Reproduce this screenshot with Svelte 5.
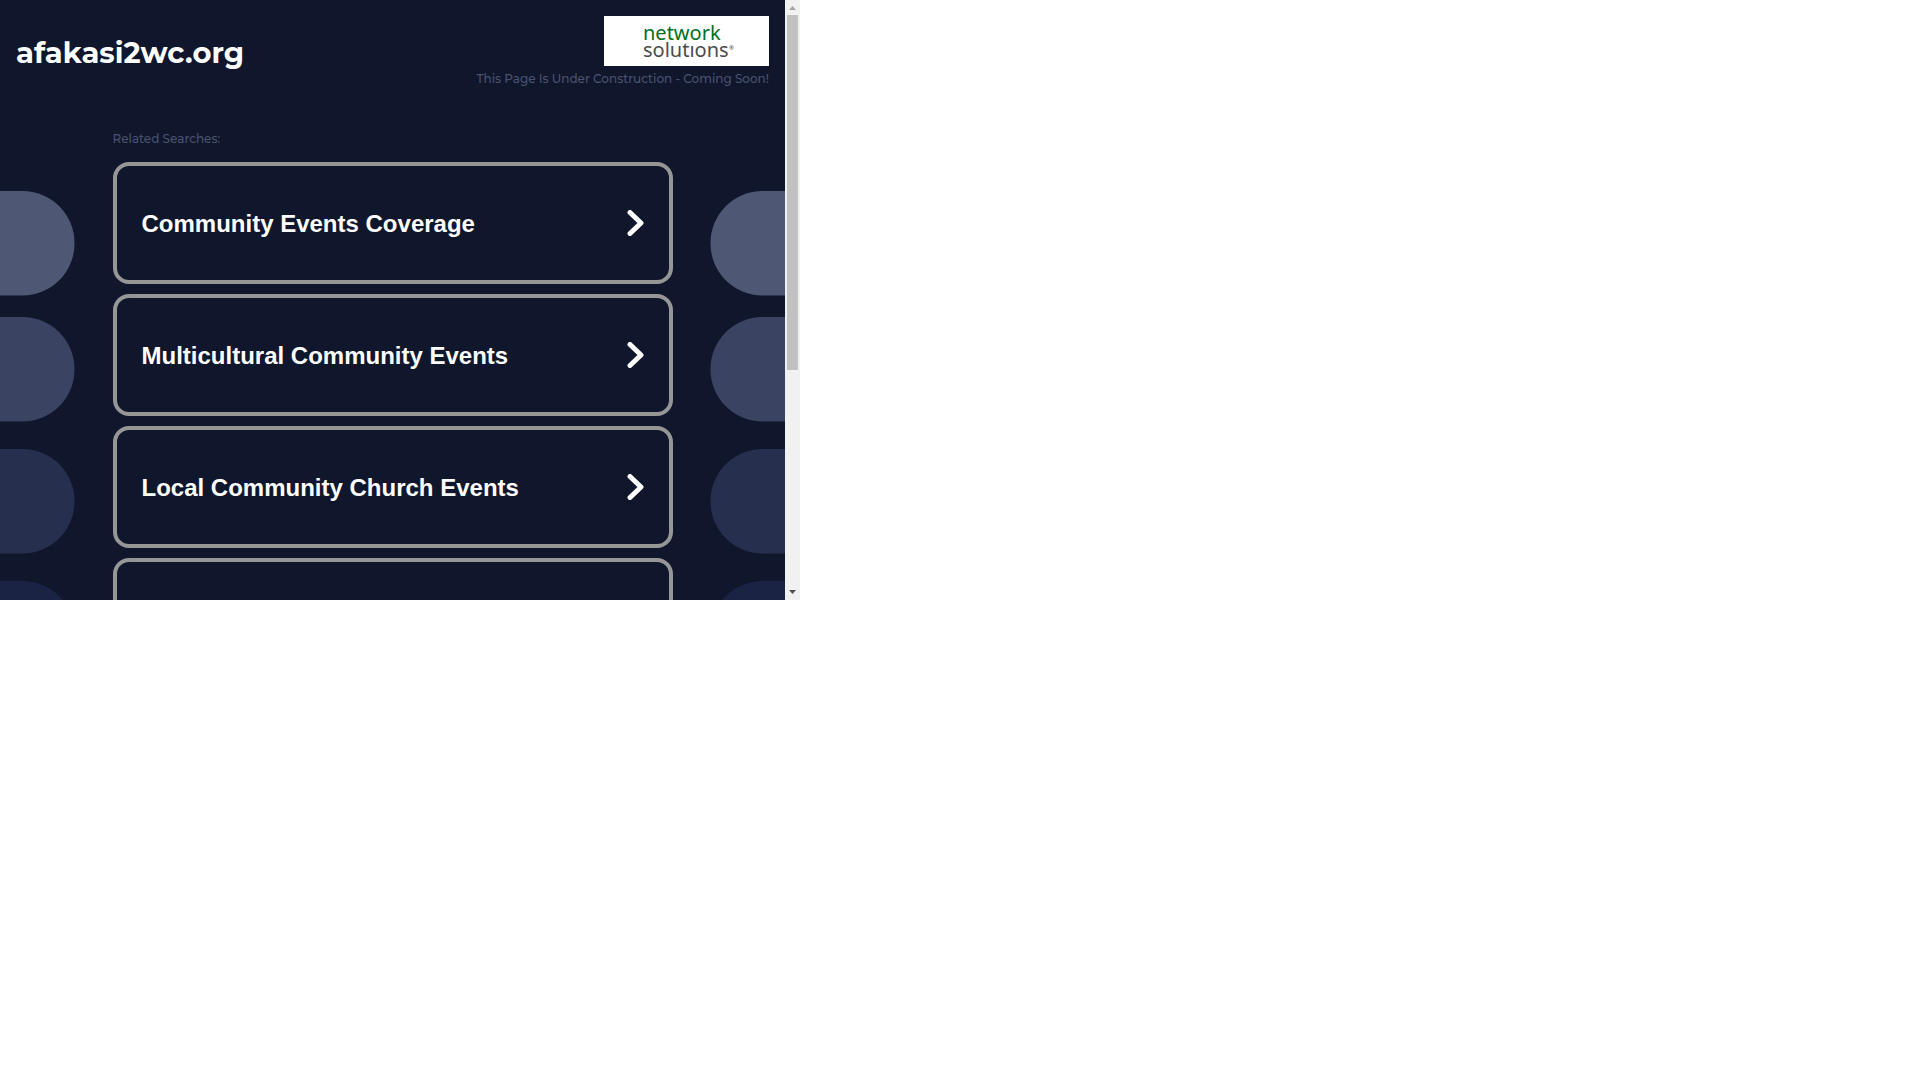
<script lang="ts">
	const domain = 'afakasi2wc.org';

	const searches = [
		'Community Events Coverage',
		'Multicultural Community Events',
		'Local Community Church Events',
		''
	];

	const pills = [
		{ y: 0, color: '#4e5773' },
		{ y: 126, color: '#3b4362' },
		{ y: 258, color: '#262f4e' },
		{ y: 390, color: '#1a2344' }
	];
</script>

{#snippet decor(side: string)}
	<svg class="decor {side}" viewBox="0 0 75 495" width="75" height="495" aria-hidden="true">
		{#each pills as pill}
			<rect x="-75" y={pill.y} width="149.5" height="104.5" rx="52" fill={pill.color} />
		{/each}
	</svg>
{/snippet}

<div class="frame">
	<div class="page">
		<header>
			<h1>{domain}</h1>
			<div class="brand">
				<a class="logo" href="#networksolutions" aria-label="Network Solutions">
					<svg viewBox="0 0 165 50" width="165" height="50">
						<text>
							<tspan x="39" y="24" fill="#00701f">network</tspan>
							<tspan x="39" y="41" fill="#4b4b4d">solutıons</tspan>
							<tspan class="mark" x="125" y="34" fill="#4b4b4d">®</tspan>
						</text>
					</svg>
				</a>
				<p class="tagline">This Page Is Under Construction - Coming Soon!</p>
			</div>
		</header>

		<div class="columns">
			{@render decor('left')}
			<main>
				<p class="label">Related Searches:</p>
				<nav>
					{#each searches as term, i}
						<a class="search" href="#search-{i + 1}">
							<span>{term}</span>
							<svg class="chevron" viewBox="0 0 17 26" width="17" height="26" aria-hidden="true">
								<path d="M3 2.5 L14 13 L3 23.5" />
							</svg>
						</a>
					{/each}
				</nav>
			</main>
			{@render decor('right')}
		</div>
	</div>

	<div class="scrollbar" aria-hidden="true">
		<svg viewBox="0 0 15 15" width="15" height="15">
			<path d="M4 10 L7.5 6 L11 10 Z" fill="#a3a3a3" />
		</svg>
		<div class="track">
			<div class="thumb"></div>
		</div>
		<svg viewBox="0 0 15 15" width="15" height="15">
			<path d="M4 5 L7.5 9 L11 5 Z" fill="#505050" />
		</svg>
	</div>
</div>

<style>
	:global(body) {
		margin: 0;
		background: #fff;
	}

	.frame {
		display: flex;
		width: 100%;
		max-width: 800px;
		height: 600px;
		overflow: hidden;
	}

	.page {
		flex: 1;
		min-width: 0;
		overflow: hidden;
		background: #10162b;
		color: #fff;
		font-family: Montserrat, Inter, sans-serif;
	}

	header {
		display: flex;
		justify-content: space-between;
		padding: 16px 16px 0;
	}

	h1 {
		margin: 16px 0 0;
		font-size: 29px;
		line-height: 42px;
		font-weight: 700;
	}

	.brand {
		display: flex;
		flex-direction: column;
		align-items: flex-end;
	}

	.logo {
		display: flex;
		background: #fff;
		font-family: 'Noto Sans', sans-serif;
		font-size: 20px;
	}

	.mark {
		font-size: 6px;
	}

	.tagline,
	.label {
		margin: 0;
		color: #4a5270;
		font-size: 12px;
		line-height: 26px;
		font-weight: 500;
	}

	.columns {
		display: grid;
		grid-template-columns: 1fr 560px 1fr;
		padding-top: 34px;
	}

	.decor {
		margin-top: 65px;
	}

	.decor.right {
		justify-self: end;
		transform: scaleX(-1);
	}

	nav {
		display: flex;
		flex-direction: column;
		gap: 10px;
		padding-top: 10px;
	}

	.search {
		box-sizing: border-box;
		display: flex;
		align-items: center;
		justify-content: space-between;
		height: 122px;
		padding: 0 25px;
		border: 4px solid #979696;
		border-radius: 16px;
		color: #fff;
		font-family: 'Liberation Sans', Arial, sans-serif;
		font-size: 24px;
		line-height: 30px;
		font-weight: 700;
		text-decoration: none;
	}

	.search span {
		padding-top: 2px;
	}

	.chevron path {
		fill: none;
		stroke: #fff;
		stroke-width: 5;
		stroke-linecap: round;
		stroke-linejoin: round;
	}

	.scrollbar {
		display: flex;
		flex-direction: column;
		width: 15px;
		background: #f1f1f1;
	}

	.track {
		flex: 1;
		padding: 0 2px;
	}

	.thumb {
		height: 355px;
		background: #c1c1c1;
	}
</style>
